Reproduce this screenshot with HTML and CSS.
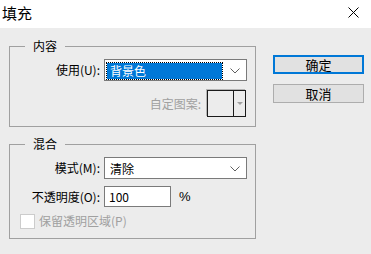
FILE: index.html
```html
<!DOCTYPE html>
<html lang="zh">
<head>
<meta charset="utf-8">
<title>填充</title>
<link rel="stylesheet" href="styles.css">
</head>
<body>
<div class="dialog">
  <div class="titlebar">
    <span class="title">填充</span>
    <svg class="close" width="11" height="11" viewBox="0 0 11 11"><path d="M0.5 0.5 L10.5 10.5 M10.5 0.5 L0.5 10.5" stroke="#000" stroke-width="1" fill="none"/></svg>
  </div>
  <div class="content">
    <div class="groups">
      <fieldset class="group group-content">
        <legend>内容</legend>
        <div class="row">
          <label class="lbl">使用(U):</label>
          <div class="select">
            <span class="sel-value focused">背景色</span>
            <svg class="chev" width="10" height="6" viewBox="0 0 10 6"><path d="M0.5 0.5 L5 5 L9.5 0.5" stroke="#606060" fill="none"/></svg>
          </div>
        </div>
        <div class="row row-pattern">
          <span class="lbl-disabled">自定图案:</span>
          <div class="pattern">
            <div class="pattern-swatch"></div>
            <div class="pattern-arrow"><span class="tri"></span></div>
          </div>
        </div>
      </fieldset>
      <fieldset class="group group-blend">
        <legend>混合</legend>
        <div class="row">
          <label class="lbl">模式(M):</label>
          <div class="select">
            <span class="sel-value">清除</span>
            <svg class="chev" width="10" height="6" viewBox="0 0 10 6"><path d="M0.5 0.5 L5 5 L9.5 0.5" stroke="#606060" fill="none"/></svg>
          </div>
        </div>
        <div class="row row-opacity">
          <label class="lbl">不透明度(O):</label>
          <div class="input">100</div>
          <span class="pct">%</span>
        </div>
        <div class="row row-check">
          <span class="checkbox"></span>
          <span class="lbl-disabled">保留透明区域(P)</span>
        </div>
      </fieldset>
    </div>
    <div class="buttons">
      <button class="btn btn-default">确定</button>
      <button class="btn">取消</button>
    </div>
  </div>
</div>
</body>
</html>
```
FILE: styles.css
```css
html, body {
  margin: 0;
  padding: 0;
}
body {
  width: 371px;
  height: 254px;
  background: #ececec;
  font-family: "Noto Sans CJK SC", "Noto Sans", sans-serif;
  font-size: 12px;
  color: #000;
  overflow: hidden;
}
.titlebar {
  height: 28px;
  background: #fff;
  display: flex;
  align-items: center;
  justify-content: space-between;
}
.title {
  font-size: 15px;
  line-height: 18px;
  padding-left: 2px;
  margin-top: -2px;
}
.close {
  margin-right: 12px;
  margin-top: -4px;
}
.content {
  display: flex;
  padding: 10px 7px 0 9px;
  gap: 17px;
}
.groups {
  width: 247px;
  display: flex;
  flex-direction: column;
  gap: 9px;
}
.group {
  margin: 0;
  border: 1px solid #a0a0a0;
  padding: 5px 8px 9px 0;
  min-width: 0;
}
.group legend {
  margin-left: 15px;
  padding: 0 8px;
  line-height: 16px;
  height: 16px;
}
.row {
  display: flex;
  align-items: center;
  line-height: 16px;
}
.lbl {
  width: 90px;
  text-align: right;
  margin-right: 4px;
  white-space: nowrap;
}
.select {
  flex: 1;
  height: 22px;
  box-sizing: border-box;
  border: 1px solid #7a7a7a;
  background: #fff;
  display: flex;
  align-items: center;
  padding: 2px 6px 1px 2px;
}
.sel-value {
  flex: 1;
  height: 16px;
  box-sizing: border-box;
  padding-left: 3px;
  margin-right: 8px;
}
.sel-value.focused {
  background: #0078d7;
  color: #fff;
  outline: 1px dotted #000;
}
.chev {
  flex: none;
}
.row-pattern {
  justify-content: flex-end;
  margin-top: 9px;
  padding-right: 1px;
}
.lbl-disabled {
  color: #a0a0a0;
  white-space: nowrap;
}
.pattern {
  margin-left: 6px;
  width: 39px;
  height: 27px;
  box-sizing: border-box;
  border: 1px solid #1a1a1a;
  box-shadow: -1px -1px 0 #b4b4b4;
  display: flex;
}
.pattern-swatch {
  flex: 1;
  border-right: 1px solid #1a1a1a;
}
.pattern-arrow {
  width: 11px;
  display: flex;
  align-items: center;
  justify-content: center;
}
.tri {
  width: 0;
  height: 0;
  border-left: 3px solid transparent;
  border-right: 3px solid transparent;
  border-top: 3px solid #a0a0a0;
}
.row-opacity {
  margin-top: 7px;
}
.input {
  width: 67px;
  height: 21px;
  box-sizing: border-box;
  border: 1px solid #7a7a7a;
  background: #fff;
  padding-left: 4px;
  line-height: 19px;
}
.pct {
  margin-left: 8px;
  font-family: "Liberation Sans", sans-serif;
  font-size: 13px;
}
.row-check {
  margin-top: 6px;
  padding-left: 10px;
}
.checkbox {
  width: 15px;
  height: 15px;
  box-sizing: border-box;
  border: 1px solid #cccccc;
  background: #fff;
  margin-right: 4px;
}
.buttons {
  display: flex;
  flex-direction: column;
  gap: 10px;
  padding-top: 17px;
}
.btn {
  width: 91px;
  height: 19px;
  box-sizing: border-box;
  margin: 0;
  padding: 0;
  background: #e1e1e1;
  border: 1px solid #adadad;
  font-family: "Noto Sans CJK SC", sans-serif;
  font-size: 13px;
  line-height: 15px;
  color: #000;
}
.btn-default {
  border: 2px solid #0078d7;
}
```
